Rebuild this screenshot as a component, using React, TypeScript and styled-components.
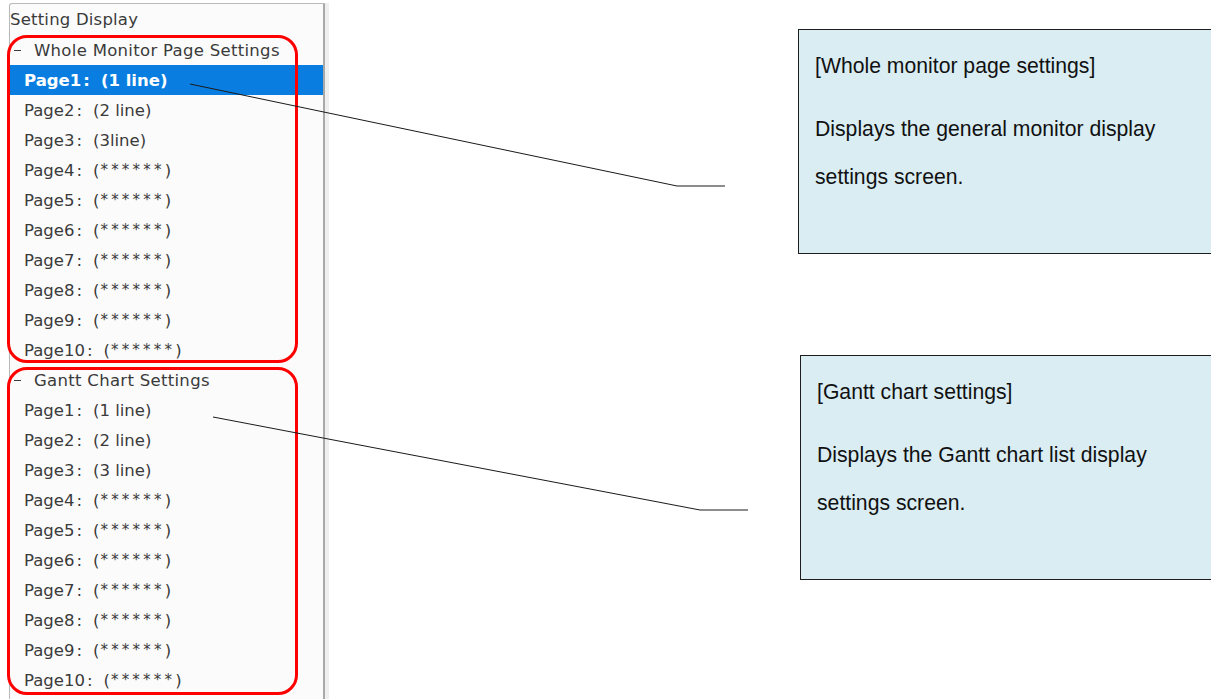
import React from "react";
import styled, { createGlobalStyle } from "styled-components";

const GlobalStyle = createGlobalStyle`
  html, body {
    margin: 0;
    padding: 0;
    width: 1211px;
    height: 699px;
    overflow: hidden;
    background: #ffffff;
  }
  #root { width: 1211px; height: 699px; }
`;

const Page = styled.div`
  position: relative;
  display: flex;
  align-items: flex-start;
  width: 1211px;
  height: 699px;
  overflow: hidden;
  background: #ffffff;
`;

const TreePanel = styled.div`
  flex: none;
  margin: 3px 0 0 9px;
  width: 313px;
  height: 730px;
  background: #fbfbfb;
  border-top: 1px solid #b9b9b9;
  border-left: 1px solid #b9b9b9;
  border-right: 2px solid #a9a9a9;
  border-top-left-radius: 3px;
  box-shadow: 4px 0 0 #efefef;
  font-family: "DejaVu Sans", "Noto Sans CJK JP", sans-serif;
  font-size: 16.5px;
  color: #3a3a3a;
`;

const PanelTitle = styled.div`
  height: 31px;
  line-height: 31px;
  white-space: nowrap;
  letter-spacing: 0.2px;
`;

const Group = styled.div`
  position: relative;
`;

const Annotation = styled.div<{ $top: number }>`
  position: absolute;
  left: -3px;
  top: ${(p) => p.$top}px;
  width: 291px;
  height: 328px;
  box-sizing: border-box;
  border: 3px solid #ff0000;
  border-radius: 20px;
  pointer-events: none;
`;

const GroupHeader = styled.div`
  display: flex;
  align-items: center;
  height: 30px;
  padding-left: 4px;
  white-space: nowrap;
  letter-spacing: 0.3px;
`;

const Collapse = styled.span`
  display: inline-block;
  width: 7px;
  height: 1px;
  margin-right: 13px;
  background: #3a3a3a;
`;

const Item = styled.div<{ $selected?: boolean }>`
  display: flex;
  align-items: center;
  height: 30px;
  padding-left: 14px;
  white-space: nowrap;
  background: ${(p) => (p.$selected ? "#0a7ee0" : "transparent")};
  color: ${(p) => (p.$selected ? "#ffffff" : "#3a3a3a")};
  font-weight: ${(p) => (p.$selected ? 700 : 400)};
`;

const Colon = styled.span`
  display: inline-block;
  padding: 0 11px 0 2px;
`;

const Stars = styled.span`
  font-size: 15px;
  letter-spacing: 3.2px;
  padding-left: 1px;
`;

const CalloutColumn = styled.div`
  flex: none;
  display: flex;
  flex-direction: column;
  gap: 101px;
  margin: 29px 0 0 473px;
  width: 440px;
`;

const Callout = styled.div<{ $shift: number }>`
  box-sizing: border-box;
  height: 225px;
  margin-left: ${(p) => p.$shift}px;
  padding: 12px 0 0 16px;
  background: #daedf3;
  border: 1px solid #1e1e1e;
  border-right: none;
  font-family: "Liberation Sans", Arial, sans-serif;
  font-size: 21.2px;
  color: #111111;
`;

const CalloutTitle = styled.p`
  margin: 0 0 15px 0;
  line-height: 48px;
  white-space: nowrap;
`;

const CalloutBody = styled.p`
  margin: 0;
  line-height: 48px;
  width: 350px;
`;

const Leaders = styled.svg`
  position: absolute;
  left: 0;
  top: 0;
  width: 1211px;
  height: 699px;
  pointer-events: none;
`;

type Entry = { page: string; label: string };

const monitorPages: Entry[] = [
  { page: "Page1", label: "(1 line)" },
  { page: "Page2", label: "(2 line)" },
  { page: "Page3", label: "(3line)" },
  { page: "Page4", label: "******" },
  { page: "Page5", label: "******" },
  { page: "Page6", label: "******" },
  { page: "Page7", label: "******" },
  { page: "Page8", label: "******" },
  { page: "Page9", label: "******" },
  { page: "Page10", label: "******" },
];

const ganttPages: Entry[] = [
  { page: "Page1", label: "(1 line)" },
  { page: "Page2", label: "(2 line)" },
  { page: "Page3", label: "(3 line)" },
  { page: "Page4", label: "******" },
  { page: "Page5", label: "******" },
  { page: "Page6", label: "******" },
  { page: "Page7", label: "******" },
  { page: "Page8", label: "******" },
  { page: "Page9", label: "******" },
  { page: "Page10", label: "******" },
];

const ItemRow: React.FC<{ entry: Entry; selected?: boolean }> = ({ entry, selected }) => (
  <Item $selected={selected}>
    {entry.page}
    <Colon>:</Colon>
    {entry.label.startsWith("*") ? (
      <>
        (<Stars>{entry.label}</Stars>)
      </>
    ) : (
      entry.label
    )}
  </Item>
);

export default function App() {
  return (
    <>
      <GlobalStyle />
      <Page>
        <TreePanel>
          <PanelTitle>Setting Display</PanelTitle>
          <Group>
            <GroupHeader>
              <Collapse />
              Whole Monitor Page Settings
            </GroupHeader>
            {monitorPages.map((e, i) => (
              <ItemRow key={e.page} entry={e} selected={i === 0} />
            ))}
            <Annotation $top={0} />
          </Group>
          <Group>
            <GroupHeader>
              <Collapse />
              Gantt Chart Settings
            </GroupHeader>
            {ganttPages.map((e) => (
              <ItemRow key={e.page} entry={e} />
            ))}
            <Annotation $top={2} />
          </Group>
        </TreePanel>
        <CalloutColumn>
          <Callout $shift={0}>
            <CalloutTitle>[Whole monitor page settings]</CalloutTitle>
            <CalloutBody>Displays the general monitor display settings screen.</CalloutBody>
          </Callout>
          <Callout $shift={2}>
            <CalloutTitle>[Gantt chart settings]</CalloutTitle>
            <CalloutBody>Displays the Gantt chart list display settings screen.</CalloutBody>
          </Callout>
        </CalloutColumn>
        <Leaders viewBox="0 0 1211 699">
          <polyline points="190,84 677,186 725,186" fill="none" stroke="#1a1a1a" strokeWidth="1" />
          <polyline points="213,417 700,510 748,510" fill="none" stroke="#1a1a1a" strokeWidth="1" />
        </Leaders>
      </Page>
    </>
  );
}
